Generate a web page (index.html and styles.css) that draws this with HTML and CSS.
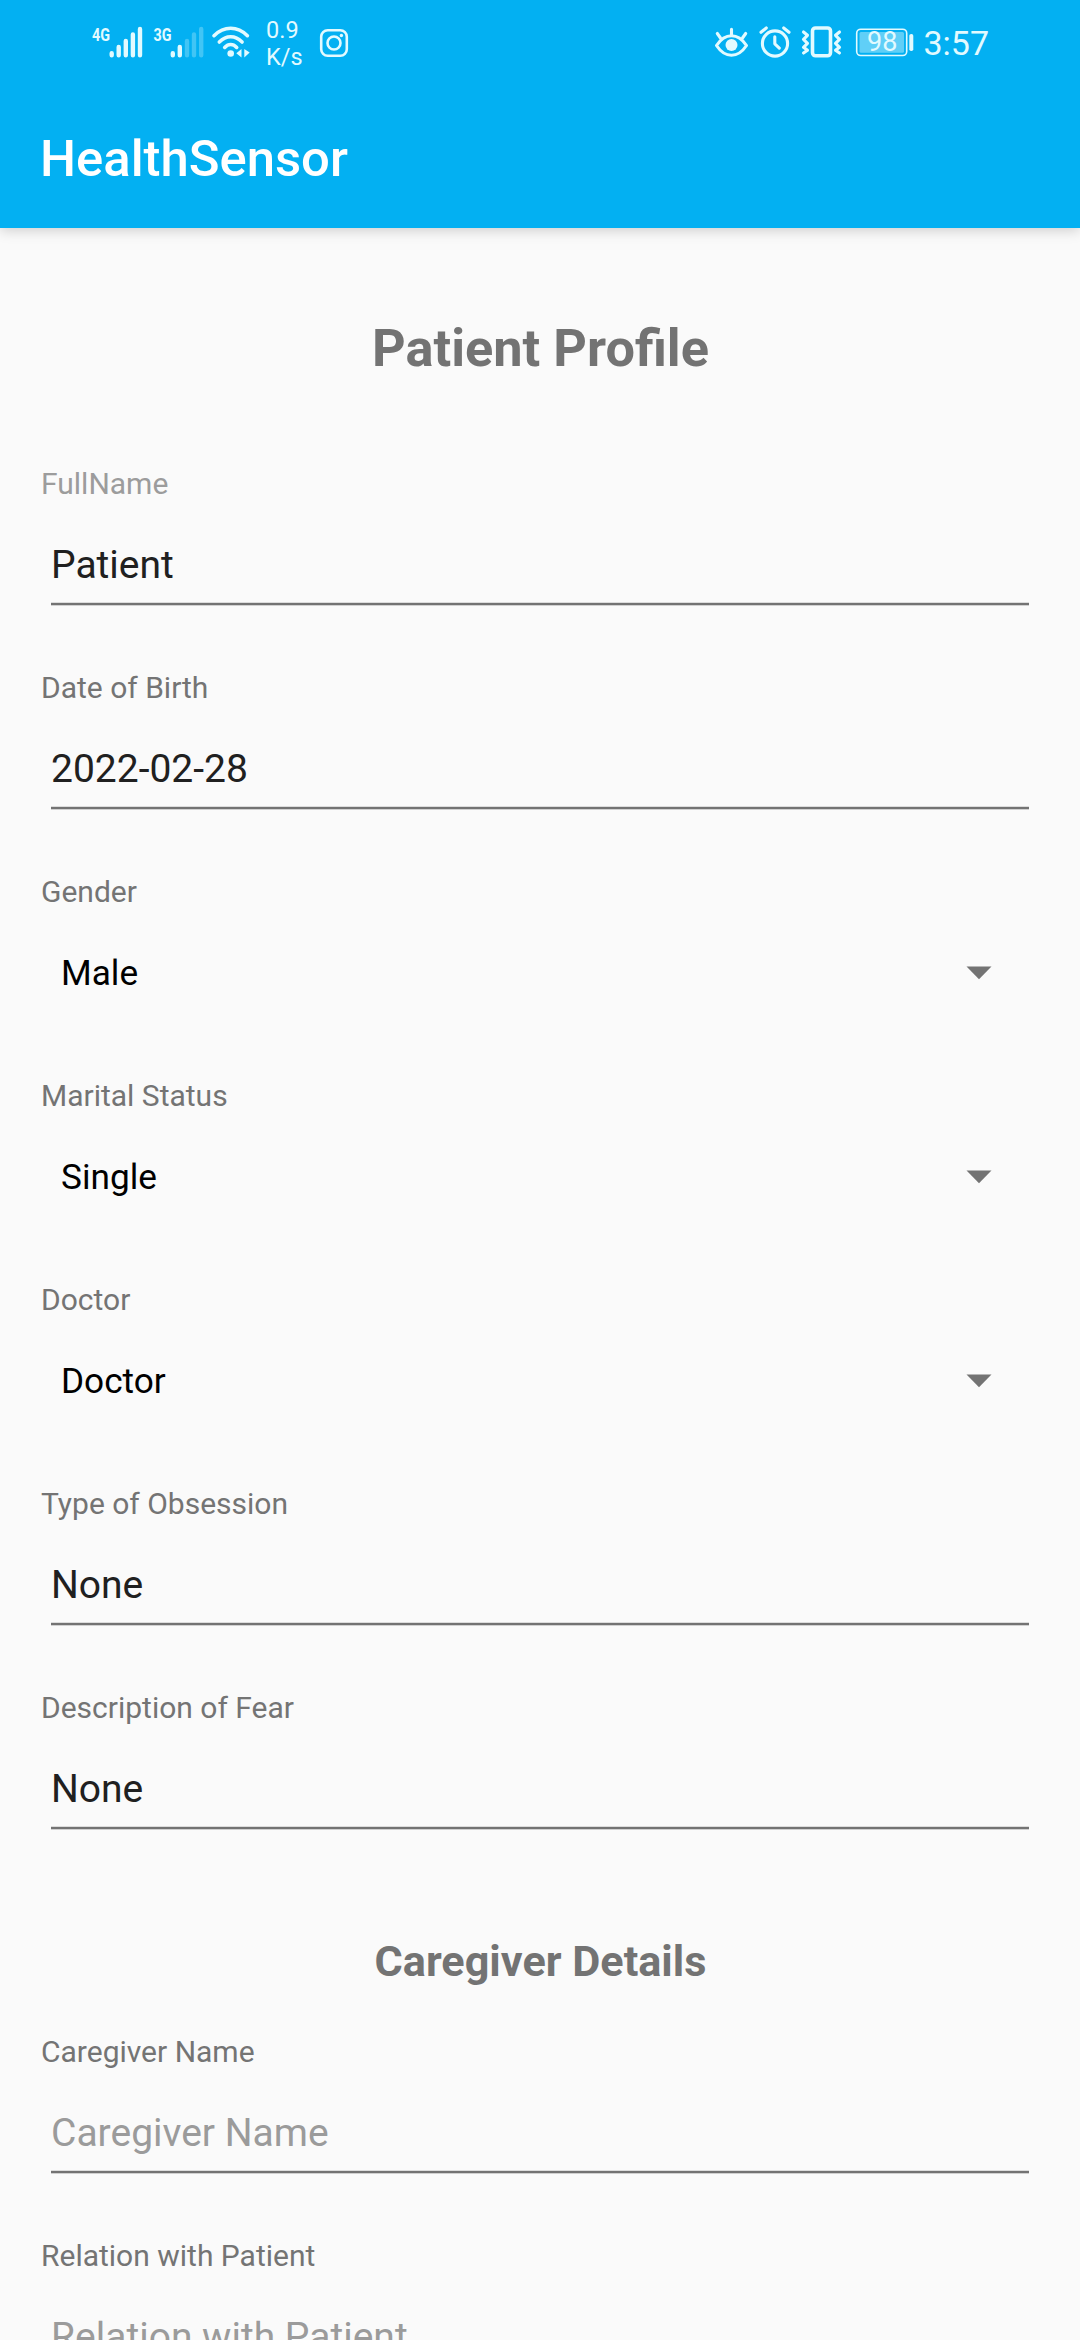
FILE: index.html
```html
<!DOCTYPE html>
<html lang="en">
<head>
<meta charset="utf-8">
<title>HealthSensor</title>
<link rel="stylesheet" href="styles.css">
</head>
<body>
<div class="screen">
  <header class="top">
    <div class="status">
      <div class="status-side">
        <svg class="signal" width="53" height="42" viewBox="91 21 53 42">
          <text class="net" x="92" y="40.500" textLength="18" lengthAdjust="spacingAndGlyphs">4G</text>
          <path class="bar" d="M111.7 53.2v2M118.7 47v8.2M125.8 41v14.2M132.9 34.4v20.8M140 29v26.2"/>
        </svg>
        <svg class="signal second" width="53" height="42" viewBox="152 21 53 42">
          <text class="net" x="153.5" y="40.500" textLength="18" lengthAdjust="spacingAndGlyphs">3G</text>
          <path class="bar" d="M172.8 53.2v2M179.8 47v8.2"/>
          <path class="bar dim" d="M187 41v14.2M194 34.4v20.8M201.2 29v26.2"/>
        </svg>
        <svg class="wifi" width="40" height="36" viewBox="211 24 40 36">
          <path class="stroke wave" d="M214 35.7Q221.500 28.300 230.700 28.300T247.400 35.700M219.300 42Q224.500 36.800 230.700 36.800T242.100 42M224.700 47.400Q227.500 44.500 230.700 44.500T236.700 47.400"/>
          <circle class="solid" cx="230.700" cy="53.500" r="3.300"/>
          <path class="solid" d="M236.300 53.200l5.200-4.200v8.500zM244.300 49l5.400 3.400-5.400 5.200z"/>
        </svg>
        <div class="speed"><span>0.9</span><span>K/s</span></div>
        <svg class="camera" width="30" height="30" viewBox="319 28 30 30">
          <rect class="stroke" x="321.200" y="30.200" width="25.600" height="25.600" rx="6.500"/>
          <circle class="stroke" cx="334" cy="43" r="6.500"/>
          <circle class="solid" cx="341.400" cy="35.500" r="1.700"/>
        </svg>
      </div>
      <div class="status-side">
        <svg class="eye" width="36" height="32" viewBox="713 26 36 32">
          <path class="stroke medium" d="M716.500 45.500Q723 35.800 731.500 35.800T746.500 45.500Q740 55.300 731.500 55.300T716.500 45.500zM731.500 29.300v5M717.300 33.500l3.200 4.500M745.700 33.500l-3.200 4.500"/>
          <circle class="solid" cx="731.500" cy="45" r="6"/>
        </svg>
        <svg class="alarm" width="34" height="34" viewBox="758 25 34 34">
          <circle class="stroke medium" cx="775" cy="43.500" r="12.600"/>
          <path class="stroke medium" d="M761 32.300l5.300-4.300M789 32.300l-5.300-4.300M774.800 36.800v7l4.500 4.300"/>
        </svg>
        <svg class="vibrate" width="44" height="34" viewBox="800 25 44 34">
          <rect class="stroke thick" x="812.500" y="28" width="18" height="27.800" rx="3"/>
          <path class="stroke medium" d="M803.500 32l4 3.300-4 4 4 4-4 4 4 3-4 2.700M839.500 32l-4 3.300 4 4-4 4 4 4-4 3 4 2.700"/>
        </svg>
        <svg class="battery" width="60" height="30" viewBox="855 27 60 30">
          <rect class="charge" x="859.500" y="32" width="44.500" height="20.700" rx="1.500"/>
          <rect class="stroke thin" x="856.700" y="29.200" width="50" height="26.300" rx="4"/>
          <rect class="solid" x="909.300" y="34" width="4" height="17" rx="1.800"/>
          <text class="level" x="867" y="50.500">98</text>
        </svg>
        <span class="clock">3:57</span>
      </div>
    </div>
    <h1 class="app-title">HealthSensor</h1>
  </header>
  <main class="form">
    <h2 class="heading">Patient Profile</h2>
    <div class="field"><label class="label faint">FullName</label><div class="input">Patient</div></div>
    <div class="field"><label class="label">Date of Birth</label><div class="input">2022-02-28</div></div>
    <div class="field"><label class="label">Gender</label><div class="select"><span>Male</span><svg class="caret" width="26" height="14" viewBox="0 0 26 14"><path d="M0.500 0.600h25L13 13.200z"/></svg></div></div>
    <div class="field"><label class="label">Marital Status</label><div class="select"><span>Single</span><svg class="caret" width="26" height="14" viewBox="0 0 26 14"><path d="M0.500 0.600h25L13 13.200z"/></svg></div></div>
    <div class="field"><label class="label">Doctor</label><div class="select"><span>Doctor</span><svg class="caret" width="26" height="14" viewBox="0 0 26 14"><path d="M0.500 0.600h25L13 13.200z"/></svg></div></div>
    <div class="field"><label class="label">Type of Obsession</label><div class="input">None</div></div>
    <div class="field"><label class="label">Description of Fear</label><div class="input">None</div></div>
    <h3 class="subheading">Caregiver Details</h3>
    <div class="field"><label class="label">Caregiver Name</label><div class="input hint">Caregiver Name</div></div>
    <div class="field"><label class="label">Relation with Patient</label><div class="input hint">Relation with Patient</div></div>
  </main>
</div>
</body>
</html>
```
FILE: styles.css
```css
* { box-sizing: border-box; }
body {
  margin: 0;
  background: #fafafa;
  font-family: Roboto, sans-serif;
}
h1, h2, h3 { margin: 0; }
.screen {
  display: flex;
  flex-direction: column;
  width: 1080px;
  height: 2340px;
  overflow: hidden;
  background: #fafafa;
}
.top {
  flex: none;
  height: 228px;
  background: #03b0f2;
  box-shadow: 0 3px 12px rgba(0, 0, 0, 0.17);
}
.status {
  display: flex;
  justify-content: space-between;
  height: 86px;
  padding: 0 91px;
  color: #e2faff;
}
.status-side { display: flex; align-items: center; }
.status svg { display: block; flex: none; }
.signal { margin-top: -2px; }
.second { margin-left: 8px; }
.wifi { margin: -2px 0 0 6px; }
.net { font: 700 19px Roboto, sans-serif; fill: #e2faff; }
.bar { fill: none; stroke: #e2faff; stroke-width: 4.4; stroke-linecap: round; }
.dim { opacity: 0.28; }
.stroke { fill: none; stroke: #e2faff; stroke-width: 2.6; stroke-linecap: round; stroke-linejoin: round; }
.medium { stroke-width: 3.1; }
.wave { stroke-width: 3.6; }
.thick { stroke-width: 3.6; }
.thin { stroke-width: 1.6; }
.solid { fill: #e2faff; }
.speed {
  display: flex;
  flex-direction: column;
  width: 36px;
  margin: 2px 0 0 15px;
  font-size: 23.500px;
  line-height: 27px;
}
.camera { margin-left: 17px; }
.eye { margin-top: -2px; }
.alarm { margin: -2px 0 0 9px; }
.vibrate { margin: -2px 0 0 8px; }
.battery { margin: -2px 0 0 11px; }
.charge { fill: #e2faff; opacity: 0.42; }
.level { font: 27px Roboto, sans-serif; fill: #e2faff; }
.clock { margin-left: 8px; font-size: 34px; line-height: 40px; }
.app-title {
  padding: 43px 40px 0;
  color: #fff;
  font-size: 50.800px;
  font-weight: 500;
  line-height: 60px;
}
.form {
  display: flex;
  flex-direction: column;
  padding: 89px 40px 0 41px;
}
.heading {
  margin-bottom: 87px;
  color: #737373;
  font-size: 52.300px;
  line-height: 62px;
  text-align: center;
}
.field {
  flex: none;
  height: 204px;
}
.label {
  display: block;
  color: #747474;
  font-size: 30px;
  line-height: 36px;
}
.faint { color: #9c9c9c; }
.input {
  height: 64px;
  margin: 40px 11px 0 10px;
  color: #202020;
  font-size: 39px;
  line-height: 46px;
  background: linear-gradient(#dcdcdc 0 1px, #737373 1px 3px, #d0d0d0 3px) bottom / 100% 4px no-repeat;
}
.hint { color: #9b9b9b; }
.select {
  display: flex;
  align-items: center;
  justify-content: space-between;
  height: 44px;
  margin: 41px 48px 0 20px;
  color: #000;
  font-size: 35.200px;
  line-height: 44px;
}
.caret { display: block; fill: #737373; }
.subheading {
  margin: 43px 0 47px;
  color: #737373;
  font-size: 43.200px;
  line-height: 50px;
  text-align: center;
}
```
